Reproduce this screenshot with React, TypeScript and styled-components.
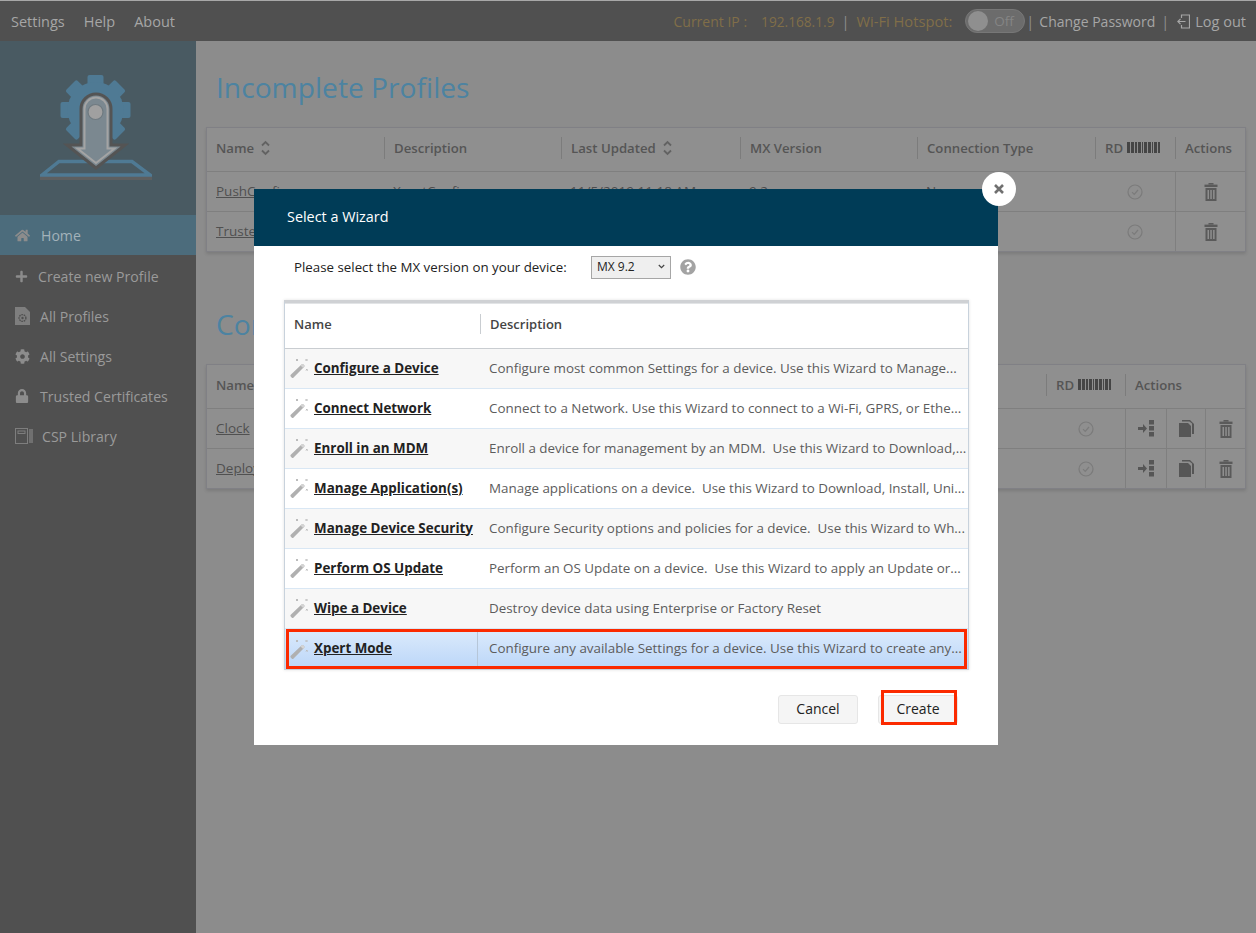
import React from 'react'
import styled, { createGlobalStyle } from 'styled-components'
import { FaHome, FaPlus, FaCog, FaLock, FaQuestionCircle } from 'react-icons/fa'

const GlobalStyle = createGlobalStyle`
  html, body {
    margin: 0;
    padding: 0;
    background: #8c8c8c;
    font-family: "Open Sans", "Noto Sans", sans-serif;
    overflow: hidden;
  }
  * {
    box-sizing: border-box;
  }
`

const wizards = [
  { name: 'Configure a Device', text: 'Configure most common Settings for a device. Use this Wizard to Manage...' },
  { name: 'Connect Network', text: 'Connect to a Network. Use this Wizard to connect to a Wi-Fi, GPRS, or Ethe...' },
  { name: 'Enroll in an MDM', text: 'Enroll a device for management by an MDM.  Use this Wizard to Download,...' },
  { name: 'Manage Application(s)', text: 'Manage applications on a device.  Use this Wizard to Download, Install, Uni...' },
  { name: 'Manage Device Security', text: 'Configure Security options and policies for a device.  Use this Wizard to Wh...' },
  { name: 'Perform OS Update', text: 'Perform an OS Update on a device.  Use this Wizard to apply an Update or...' },
  { name: 'Wipe a Device', text: 'Destroy device data using Enterprise or Factory Reset' },
  { name: 'Xpert Mode', text: 'Configure any available Settings for a device. Use this Wizard to create any...' },
]

const firstCols = '177px 177px 179px 177px 178px 80px 1fr'
const secondHead = '167px 168px 168px 168px 168px 79px 1fr'
const secondBody = '167px 168px 168px 168px 168px 79px 41px 39px 1fr'

const TrashIcon = () => (
  <svg width="14" height="18" viewBox="0 0 14 18" fill="#5a5a5a">
    <rect x="4.5" y="0" width="5" height="1.6" />
    <rect x="0.5" y="1.6" width="13" height="2.4" />
    <path d="M1.500 5h11v13h-11zM3.500 7v9h1.500V7zM6.300 7v9h1.500V7zM9.100 7v9h1.500V7z" fillRule="evenodd" />
  </svg>
)

const CopyIcon = () => (
  <svg width="15" height="17" viewBox="0 0 15 17" fill="#565656">
    <path d="M0 3h9l3 3v11H0z" />
    <path d="M3 0h8l4 4v10h-2V3.600L10.400 1.400H3z" />
  </svg>
)

const DeployIcon = () => (
  <svg width="16" height="17" viewBox="0 0 16 17" fill="#565656">
    <path d="M0 7h5V4l4 4.500L5 13v-3H0z" />
    <rect x="11" y="0" width="5" height="4.500" />
    <rect x="11" y="6" width="5" height="4.500" />
    <rect x="11" y="12" width="5" height="4.500" />
  </svg>
)

const CheckIcon = () => (
  <svg width="16" height="16" viewBox="0 0 16 16" fill="none" stroke="#7b7b7b" strokeWidth="1.2">
    <circle cx="8" cy="8" r="7" />
    <path d="M5 8.200l2.200 2.200L11 6" />
  </svg>
)

const SortIcon = () => (
  <svg width="9" height="16" viewBox="0 0 9 16" fill="none" stroke="#626262" strokeWidth="1.8">
    <path d="M1 5.500L4.500 2 8 5.500M1 10.500L4.500 14 8 10.500" />
  </svg>
)

const BarcodeIcon = () => (
  <BarcodeSvg width="33" height="11" viewBox="0 0 33 11" fill="#454545">
    <rect x="0" width="3" height="11" />
    <rect x="4" width="3" height="11" />
    <rect x="8" width="2" height="11" />
    <rect x="11" width="3" height="11" />
    <rect x="15" width="1" height="11" />
    <rect x="17" width="3" height="11" />
    <rect x="21" width="3" height="11" />
    <rect x="25" width="1" height="11" />
    <rect x="27" width="3" height="11" />
    <rect x="31" width="2" height="11" />
  </BarcodeSvg>
)

const WandIcon = () => (
  <svg width="19" height="20" viewBox="0 0 19 20">
    <path d="M1 16.500L11.500 6.500a1.400 1.400 0 0 1 2 0l.5.5a1.400 1.400 0 0 1 0 2L3.600 19.400a1.400 1.400 0 0 1-2 0l-.6-.6a1.600 1.600 0 0 1 0-2.300z" fill="#b0b0b0" />
    <path d="M10.500 7.500l2.600 2.600 1-1a1.400 1.400 0 0 0 0-2l-.6-.6a1.400 1.400 0 0 0-2 0z" fill="#d4d4d4" />
    <path d="M6 1l2 2M8 1L6 3M15.500 1l2 2M17.500 1l-2 2M16 11l1.600 1.600M17.600 11L16 12.600" stroke="#bcbcbc" strokeWidth="1" fill="none" />
  </svg>
)

const FileGearIcon = () => (
  <svg width="15" height="18" viewBox="0 0 15 18">
    <path d="M0 0h10l5 5v13H0z" fill="#7e7e7e" />
    <circle cx="7.500" cy="11" r="3.400" fill="none" stroke="#4f4f4f" strokeWidth="1.400" strokeDasharray="1.600 .8" />
    <circle cx="7.500" cy="11" r="1.200" fill="#4f4f4f" />
  </svg>
)

const BookIcon = () => (
  <svg width="18" height="16" viewBox="0 0 18 16" fill="none" stroke="#7e7e7e">
    <rect x="0.500" y="0.500" width="12" height="15" strokeWidth="1" />
    <rect x="3" y="3" width="7" height="2.500" strokeWidth="1" />
    <path d="M15 1v14M17 1v14" strokeWidth="1.400" />
  </svg>
)

const LogoutIcon = () => (
  <svg width="13" height="15" viewBox="0 0 13 15" fill="none" stroke="#a6a6a6" strokeWidth="1.2">
    <path d="M4.500 4V1h8v13h-8v-3" />
    <path d="M0.500 7.500h8M3.500 4.800L0.800 7.500l2.700 2.700" />
  </svg>
)

const Logo = () => (
  <svg width="112" height="105" viewBox="0 0 112 105">
    {[0, 45, 90, 135, 180, 225, 270, 315].map((angle) => (
      <rect key={angle} x="47.500" y="0" width="16" height="14" rx="2" fill="#4f7a94" transform={`rotate(${angle} 55.500 35)`} />
    ))}
    <circle cx="55.500" cy="35" r="28" fill="#4f7a94" />
    <rect x="0" y="100" width="112" height="5" fill="#5d5f60" />
    <path d="M2 100L19 86.500h73L110 100z" fill="none" stroke="#4f7a94" strokeWidth="3.500" />
    <path d="M41 34a15 15 0 0 1 30 0v36h14L56 93 27 70h14z" fill="#7b8890" stroke="#545454" strokeWidth="3" />
    <path d="M44.500 34a11.500 11.500 0 0 1 23 0v39.500h7L56 88 37.500 73.500h7z" fill="none" stroke="#a4a4a4" strokeWidth="2" />
    <circle cx="55.500" cy="37" r="7.500" fill="#a0a0a0" stroke="#6f7a80" strokeWidth="1.200" />
  </svg>
)

const App: React.FC = () => (
  <Page>
    <GlobalStyle />
    <TopBar>
      <TopNav>
        <NavLink>Settings</NavLink>
        <NavLink>Help</NavLink>
        <NavLink>About</NavLink>
      </TopNav>
      <TopStatus>
        <Gold>Current IP :</Gold>
        <Gold $gap={14} $size={13.7}>192.168.1.9</Gold>
        <Pipe $left={7} $right={7}>|</Pipe>
        <Gold $size={14.7}>Wi-Fi Hotspot:</Gold>
        <Toggle>
          <Knob />
          <ToggleText>Off</ToggleText>
        </Toggle>
        <Pipe $left={1} $right={5}>|</Pipe>
        <TopLink>Change Password</TopLink>
        <Pipe $left={6} $right={8}>|</Pipe>
        <LogoutIcon />
        <LogoutText>Log out</LogoutText>
      </TopStatus>
    </TopBar>

    <Body>
      <Sidebar>
        <LogoArea>
          <Logo />
        </LogoArea>
        <NavItem $active $gap={11}>
          <FaHome size={15} />
          Home
        </NavItem>
        <NavItem $gap={10}>
          <FaPlus size={13} />
          Create new Profile
        </NavItem>
        <NavItem $gap={10}>
          <FileGearIcon />
          All Profiles
        </NavItem>
        <NavItem $gap={10}>
          <FaCog size={15} />
          All Settings
        </NavItem>
        <NavItem $gap={11}>
          <FaLock size={14} />
          Trusted Certificates
        </NavItem>
        <NavItem $gap={9}>
          <BookIcon />
          CSP Library
        </NavItem>
      </Sidebar>

      <Main>
        <Title>Incomplete Profiles</Title>
        <Card>
          <HeadRow $cols={firstCols}>
            <HeadCell>Name <SortIcon /></HeadCell>
            <HeadCell $divider>Description</HeadCell>
            <HeadCell $divider>Last Updated <SortIcon /></HeadCell>
            <HeadCell $divider>MX Version</HeadCell>
            <HeadCell $divider>Connection Type</HeadCell>
            <HeadCell $divider>RD <BarcodeIcon /></HeadCell>
            <HeadCell $divider>Actions</HeadCell>
          </HeadRow>
          <BodyRow $cols={firstCols}>
            <Cell><ProfileLink>PushConfig</ProfileLink></Cell>
            <Cell>XpertConfig</Cell>
            <Cell>11/5/2019 11:18 AM</Cell>
            <Cell>9.2</Cell>
            <Cell>None</Cell>
            <IconCell><CheckIcon /></IconCell>
            <IconCell $line><TrashIcon /></IconCell>
          </BodyRow>
          <BodyRow $cols={firstCols}>
            <Cell><ProfileLink>TrustedCert</ProfileLink></Cell>
            <Cell>XpertConfig</Cell>
            <Cell>11/5/2019 11:20 AM</Cell>
            <Cell>9.2</Cell>
            <Cell>None</Cell>
            <IconCell><CheckIcon /></IconCell>
            <IconCell $line><TrashIcon /></IconCell>
          </BodyRow>
        </Card>

        <Title $second>Completed Profiles</Title>
        <Card>
          <HeadRow $cols={secondHead}>
            <HeadCell>Name <SortIcon /></HeadCell>
            <HeadCell $divider>Description</HeadCell>
            <HeadCell $divider>Last Updated <SortIcon /></HeadCell>
            <HeadCell $divider>MX Version</HeadCell>
            <HeadCell $divider>Connection Type</HeadCell>
            <HeadCell $divider>RD <BarcodeIcon /></HeadCell>
            <HeadCell $divider>Actions</HeadCell>
          </HeadRow>
          {['Clock', 'Deploy'].map((name) => (
            <BodyRow key={name} $cols={secondBody}>
              <Cell><ProfileLink>{name}</ProfileLink></Cell>
              <Cell>XpertConfig</Cell>
              <Cell>11/5/2019 11:18 AM</Cell>
              <Cell>9.2</Cell>
              <Cell>None</Cell>
              <IconCell><CheckIcon /></IconCell>
              <IconCell $line><DeployIcon /></IconCell>
              <IconCell $line><CopyIcon /></IconCell>
              <IconCell $line><TrashIcon /></IconCell>
            </BodyRow>
          ))}
        </Card>
      </Main>
    </Body>

    <Modal>
      <CloseButton>
        <svg width="10" height="10" viewBox="0 0 10 10" stroke="#707070" strokeWidth="2.600">
          <path d="M1 1l8 8M9 1l-8 8" />
        </svg>
      </CloseButton>
      <ModalHeader>Select a Wizard</ModalHeader>
      <VersionRow>
        <VersionLabel>Please select the MX version on your device:</VersionLabel>
        <SelectBox>
          MX 9.2
          <svg width="7" height="5" viewBox="0 0 7 5" fill="none" stroke="#444" strokeWidth="1.200">
            <path d="M.8 1l2.700 2.700L6.200 1" />
          </svg>
        </SelectBox>
        <HelpIcon>
          <FaQuestionCircle size={16} />
        </HelpIcon>
      </VersionRow>
      <WizardTable>
        <WizardHead>
          <WizardHeadCell>Name</WizardHeadCell>
          <WizardHeadCell $divider>Description</WizardHeadCell>
        </WizardHead>
        {wizards.map((wizard, index) => (
          <WizardRow key={wizard.name} $odd={index % 2 === 0} $selected={wizard.name === 'Xpert Mode'}>
            <WizardName>
              <WandIcon />
              <WizardLink>{wizard.name}</WizardLink>
            </WizardName>
            <WizardText $selected={wizard.name === 'Xpert Mode'}>{wizard.text}</WizardText>
          </WizardRow>
        ))}
      </WizardTable>
      <ModalFooter>
        <FooterButton>Cancel</FooterButton>
        <FooterButton $marked>Create</FooterButton>
      </ModalFooter>
    </Modal>
  </Page>
)

const Page = styled.div`
  position: relative;
  width: 1256px;
  height: 933px;
  overflow: hidden;
  background: #8c8c8c;
`

const TopBar = styled.header`
  height: 41px;
  background: #505050;
  border-top: 1px solid #a8a8a8;
  display: flex;
  align-items: center;
  justify-content: space-between;
  padding: 0 10px 0 11px;
  font-size: 14.5px;
`

const TopNav = styled.nav`
  display: flex;
  gap: 19px;
`

const NavLink = styled.span`
  color: #a6a6a6;
  font-size: 14.5px;
`

const TopLink = styled.span`
  color: #a6a6a6;
  font-size: 14px;
`

const LogoutText = styled(TopLink)`
  margin-left: 5px;
  font-size: 14.5px;
`

const TopStatus = styled.div`
  display: flex;
  align-items: center;
`

const Gold = styled.span<{ $gap?: number; $size?: number }>`
  color: #806e48;
  font-size: ${({ $size }) => $size ?? 14}px;
  margin-left: ${({ $gap }) => $gap ?? 0}px;
`

const Pipe = styled.span<{ $left: number; $right: number }>`
  color: #8d8d8d;
  margin: 0 ${({ $right }) => $right}px 0 ${({ $left }) => $left}px;
`

const Toggle = styled.div`
  width: 60px;
  height: 24px;
  margin-left: 13px;
  border-radius: 12px;
  background: #6c6c6c;
  border: 1px solid #777;
  display: flex;
  align-items: center;
  padding-left: 2px;
`

const Knob = styled.div`
  width: 20px;
  height: 20px;
  border-radius: 50%;
  background: #8f8f8f;
`

const ToggleText = styled.span`
  color: #858585;
  margin-left: 6px;
  font-size: 13.5px;
`

const Body = styled.div`
  display: flex;
  height: 892px;
`

const Sidebar = styled.aside`
  width: 196px;
  background: #505050;
  flex-shrink: 0;
`

const LogoArea = styled.div`
  height: 174px;
  background: #495a62;
  display: flex;
  justify-content: center;
  padding: 34px 4px 0 0;
`

const NavItem = styled.div<{ $active?: boolean; $gap: number }>`
  height: 40px;
  display: flex;
  align-items: center;
  gap: ${({ $gap }) => $gap}px;
  padding-left: 15px;
  padding-top: ${({ $active }) => ($active ? '0' : '2px')};
  font-size: 14.1px;
  color: ${({ $active }) => ($active ? '#a3b2ba' : '#9a9a9a')};
  background: ${({ $active }) => ($active ? '#4c6c7c' : 'transparent')};

  svg {
    color: #8c8c8c;
    flex-shrink: 0;
  }
`

const Main = styled.main`
  flex: 1;
  padding: 28px 10px 0;
`

const Title = styled.h2<{ $second?: boolean }>`
  margin: ${({ $second }) => ($second ? '54px' : '0')} 0 20px 10px;
  height: 38px;
  line-height: 36px;
  font-size: 28.2px;
  font-weight: 400;
  color: #4c83a1;
  white-space: nowrap;
`

const Card = styled.section`
  background: #8f8f8f;
  border: 1px solid #808085;
  box-shadow: 0 2px 3px rgba(0, 0, 0, 0.12);
`

const HeadRow = styled.div<{ $cols: string }>`
  display: grid;
  grid-template-columns: ${({ $cols }) => $cols};
  height: 43px;
  align-items: center;
  padding-bottom: 4px;
`

const HeadCell = styled.div<{ $divider?: boolean }>`
  display: flex;
  align-items: center;
  gap: 7px;
  height: 22px;
  padding-left: 9px;
  font-size: 13.2px;
  font-weight: 600;
  color: #555;
  white-space: nowrap;
  border-left: ${({ $divider }) => ($divider ? '1px solid #7c7c7c' : 'none')};
`

const BarcodeSvg = styled.svg`
  margin-left: -3px;
`

const BodyRow = styled.div<{ $cols: string }>`
  display: grid;
  grid-template-columns: ${({ $cols }) => $cols};
  height: 40px;
  border-top: 1px solid #7f7f7f;
  align-items: stretch;
`

const Cell = styled.div`
  display: flex;
  align-items: center;
  padding-left: 9px;
  padding-bottom: 1px;
  font-size: 13.5px;
  color: #4d4d4d;
  white-space: nowrap;
  overflow: hidden;
`

const IconCell = styled.div<{ $line?: boolean }>`
  display: flex;
  align-items: center;
  justify-content: center;
  border-left: ${({ $line }) => ($line ? '1px solid #7f7f7f' : 'none')};
`

const ProfileLink = styled.span`
  text-decoration: underline;
  color: #505050;
`

const Modal = styled.div`
  position: absolute;
  left: 254px;
  top: 189px;
  width: 744px;
  height: 556px;
  background: #fff;
`

const CloseButton = styled.div`
  position: absolute;
  top: -17px;
  right: -18px;
  width: 34px;
  height: 34px;
  border-radius: 50%;
  background: #fff;
  display: flex;
  align-items: center;
  justify-content: center;
`

const ModalHeader = styled.div`
  height: 57px;
  background: #003c57;
  color: #fff;
  display: flex;
  align-items: center;
  padding: 0 0 2px 33px;
  font-size: 14.4px;
`

const VersionRow = styled.div`
  height: 42px;
  display: flex;
  align-items: center;
  padding-left: 40px;
`

const VersionLabel = styled.span`
  width: 297px;
  font-size: 13.3px;
  color: #222;
  white-space: nowrap;
`

const SelectBox = styled.div`
  width: 80px;
  height: 23px;
  background: #efefef;
  border: 1px solid #a6a6a6;
  display: flex;
  align-items: center;
  justify-content: space-between;
  padding: 0 5px 2px;
  font-size: 12px;
  color: #222;
`

const HelpIcon = styled.span`
  margin-left: 9px;
  display: flex;
  color: #a3a3a3;
`

const WizardTable = styled.div`
  margin: 12px 29px 0 30px;
  border: 1px solid #c8d2dc;
  border-top: 3px solid #cfd1d4;
  box-shadow: 0 0 3px rgba(0, 0, 0, 0.12);
`

const WizardHead = styled.div`
  display: grid;
  grid-template-columns: 195px 1fr;
  height: 46px;
  padding-bottom: 4px;
  align-items: center;
  background: #fff;
  border-bottom: 1px solid #c9cdd1;
  border-top: 1px solid #e2e4e6;
`

const WizardHeadCell = styled.div<{ $divider?: boolean }>`
  height: 20px;
  line-height: 20px;
  padding-left: 9px;
  font-size: 13px;
  font-weight: 600;
  color: #444;
  border-left: ${({ $divider }) => ($divider ? '1px solid #c9cdd1' : 'none')};
`

const WizardRow = styled.div<{ $odd: boolean; $selected: boolean }>`
  position: relative;
  display: grid;
  grid-template-columns: ${({ $selected }) => ($selected ? '192px' : '195px')} 1fr;
  height: 40px;
  border-bottom: ${({ $selected }) => ($selected ? 'none' : '1px solid #d9e7f4')};
  background: ${({ $selected, $odd }) =>
    $selected ? 'linear-gradient(#dcebfc, #bbd6f8)' : $odd ? '#f7f7f7' : '#fff'};

  ${({ $selected }) =>
    $selected &&
    `&::after {
      content: '';
      position: absolute;
      inset: 0 1px 0 1px;
      border: 3px solid #fb2a00;
    }`}
`

const WizardName = styled.div`
  display: flex;
  align-items: center;
  gap: 5px;
  padding: 0 0 1px 5px;
`

const WizardLink = styled.span`
  font-size: 13.4px;
  font-weight: 700;
  color: #222;
  text-decoration: underline;
  white-space: nowrap;
  margin-bottom: 1px;
`

const WizardText = styled.div<{ $selected: boolean }>`
  display: flex;
  align-items: center;
  padding-left: ${({ $selected }) => ($selected ? '11px' : '9px')};
  padding-bottom: 2px;
  border-left: ${({ $selected }) => ($selected ? '1px solid #b6c6d8' : 'none')};
  font-size: 13.4px;
  color: #5c5c5c;
  white-space: pre;
  overflow: hidden;
`

const ModalFooter = styled.div`
  display: flex;
  justify-content: flex-end;
  gap: 20px;
  margin: 25px 40px 0 0;
`

const FooterButton = styled.div<{ $marked?: boolean }>`
  position: relative;
  width: 80px;
  height: 29px;
  padding-bottom: 2px;
  border: 1px solid #e6e6e6;
  border-radius: 3px;
  background: #f5f5f5;
  display: flex;
  align-items: center;
  justify-content: center;
  font-size: 14px;
  color: #222;

  ${({ $marked }) =>
    $marked &&
    `&::after {
      content: '';
      position: absolute;
      top: -6px;
      left: 2px;
      right: 0;
      bottom: -2px;
      border: 3px solid #fb2a00;
    }`}
`

export default App
